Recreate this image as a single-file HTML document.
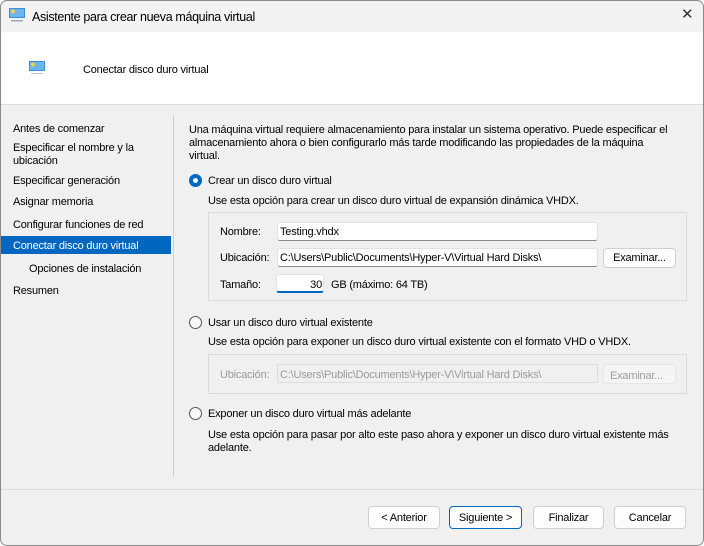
<!DOCTYPE html>
<html><head><meta charset="utf-8"><style>
*{margin:0;padding:0;box-sizing:border-box}
body{width:704px;height:546px;overflow:hidden;background:#fff;font-family:"Liberation Sans",sans-serif;font-size:11px;letter-spacing:-0.2px;color:#000}
.w{position:absolute;left:0;top:0;width:704px;height:546px;background:#f0f0f0;border-radius:7px;overflow:hidden}
.bd{position:absolute;left:0;top:0;width:704px;height:546px;border:1px solid #8a8a8a;border-radius:7px;pointer-events:none}
.a{position:absolute;white-space:nowrap;line-height:14px;padding-top:1px}
.tb{position:absolute;left:0;top:0;width:704px;height:32px;background:#f3f3f3}
.hd{position:absolute;left:0;top:32px;width:704px;height:73px;background:#fff;border-bottom:1px solid #dcdcdc}
.box{position:absolute;background:#fff;border:1px solid #e2e2e2;border-bottom:1px solid #8a8a8a;border-radius:3px}
.btn{position:absolute;background:#fdfdfd;border:1px solid #d0d0d0;border-radius:4px;text-align:center;line-height:23px}
.grp{position:absolute;border:1px solid #dadada}
.rad{position:absolute;width:13px;height:13px;border-radius:50%;border:1px solid #555;background:#f8f8f8}
.d{color:#9a9a9a}
</style></head><body><div class="w">
<div class="tb"></div>
<svg style="position:absolute;left:8px;top:7px" width="18" height="16" viewBox="0 0 18 16"><rect x="1" y="1" width="16" height="10" fill="#3a8fd8"/><rect x="2" y="2" width="14" height="8" fill="#6cb6ee"/><circle cx="5" cy="4.5" r="2" fill="#f6d24a"/><rect x="3" y="13" width="12" height="1.5" fill="#9ab"/></svg>
<div class="a" style="left:32px;top:9px;font-size:12.5px;letter-spacing:-0.35px">Asistente para crear nueva máquina virtual</div>
<div class="a" style="left:681px;top:7px;font-size:15px;color:#333">✕</div>
<div class="hd"></div>
<svg style="position:absolute;left:28px;top:60px" width="18" height="16" viewBox="0 0 18 16"><rect x="1" y="1" width="16" height="10" fill="#3a8fd8"/><rect x="2" y="2" width="14" height="8" fill="#6cb6ee"/><circle cx="5" cy="4.5" r="2" fill="#f6d24a"/><rect x="3" y="13" width="12" height="1" fill="#bcc"/></svg>
<div class="a" style="left:83px;top:62px">Conectar disco duro virtual</div>

<div class="a" style="left:13px;top:121px">Antes de comenzar</div>
<div class="a" style="left:13px;top:140px">Especificar el nombre y la</div>
<div class="a" style="left:13px;top:153px">ubicación</div>
<div class="a" style="left:13px;top:173px">Especificar generación</div>
<div class="a" style="left:13px;top:194px">Asignar memoria</div>
<div class="a" style="left:13px;top:217px">Configurar funciones de red</div>
<div style="position:absolute;left:0;top:236px;width:171px;height:18px;background:#0067c0"></div>
<div class="a" style="left:13px;top:238px;color:#fff">Conectar disco duro virtual</div>
<div class="a" style="left:29px;top:261px">Opciones de instalación</div>
<div class="a" style="left:13px;top:283px">Resumen</div>
<div style="position:absolute;left:173px;top:115px;width:1px;height:362px;background:#cfcfcf"></div>

<div class="a" style="left:189px;top:123px;line-height:13px">Una máquina virtual requiere almacenamiento para instalar un sistema operativo. Puede especificar el<br>almacenamiento ahora o bien configurarlo más tarde modificando las propiedades de la máquina<br>virtual.</div>

<div class="rad" style="left:189px;top:174px;border:4px solid #0067c0;background:#fff"></div>
<div class="a" style="left:208px;top:173px">Crear un disco duro virtual</div>
<div class="a" style="left:208px;top:193px">Use esta opción para crear un disco duro virtual de expansión dinámica VHDX.</div>
<div class="grp" style="left:208px;top:212px;width:479px;height:89px"></div>
<div class="a" style="left:220px;top:224px">Nombre:</div>
<div class="box" style="left:277px;top:222px;width:321px;height:19px"></div>
<div class="a" style="left:280px;top:224px">Testing.vhdx</div>
<div class="a" style="left:220px;top:250px">Ubicación:</div>
<div class="box" style="left:277px;top:248px;width:321px;height:19px"></div>
<div class="a" style="left:280px;top:250px">C:\Users\Public\Documents\Hyper-V\Virtual Hard Disks\</div>
<div class="btn" style="left:603px;top:248px;width:73px;height:20px;line-height:19px">Examinar...</div>
<div class="a" style="left:220px;top:277px">Tamaño:</div>
<div class="box" style="left:276px;top:274px;width:48px;height:19px;border-bottom:2px solid #0067c0"></div>
<div class="a" style="left:276px;top:277px;width:46px;text-align:right">30</div>
<div class="a" style="left:331px;top:277px">GB (máximo: 64 TB)</div>

<div class="rad" style="left:189px;top:316px"></div>
<div class="a" style="left:208px;top:315px">Usar un disco duro virtual existente</div>
<div class="a" style="left:208px;top:334px">Use esta opción para exponer un disco duro virtual existente con el formato VHD o VHDX.</div>
<div class="grp" style="left:208px;top:354px;width:479px;height:40px"></div>
<div class="a d" style="left:220px;top:367px">Ubicación:</div>
<div style="position:absolute;left:277px;top:364px;width:321px;height:19px;border:1px solid #ddd;background:#f0f0f0"></div>
<div class="a d" style="left:280px;top:367px">C:\Users\Public\Documents\Hyper-V\Virtual Hard Disks\</div>
<div style="position:absolute;left:603px;top:364px;width:73px;height:20px;border:1px solid #e6e6e6;background:#f5f5f5;border-radius:4px"></div>
<div class="a d" style="left:610px;top:368px">Examinar...</div>

<div class="rad" style="left:189px;top:407px"></div>
<div class="a" style="left:208px;top:406px">Exponer un disco duro virtual más adelante</div>
<div class="a" style="left:208px;top:428px;line-height:13px">Use esta opción para pasar por alto este paso ahora y exponer un disco duro virtual existente más<br>adelante.</div>

<div style="position:absolute;left:0;top:489px;width:704px;height:1px;background:#dcdcdc"></div>
<div class="btn" style="left:368px;top:506px;width:72px;height:23px;line-height:22px">&lt; Anterior</div>
<div class="btn" style="left:449px;top:506px;width:73px;height:23px;line-height:22px;border:1px solid #0067c0">Siguiente &gt;</div>
<div class="btn" style="left:533px;top:506px;width:71px;height:23px;line-height:22px">Finalizar</div>
<div class="btn" style="left:614px;top:506px;width:72px;height:23px;line-height:22px">Cancelar</div>
</div><div class="bd"></div></body></html>
